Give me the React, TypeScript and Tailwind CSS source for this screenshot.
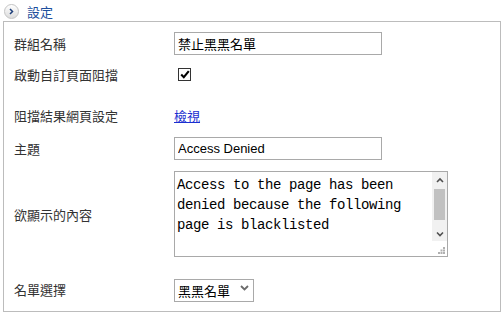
import React from 'react';

const cjk = { fontFamily: '"Noto Sans CJK TC", "Noto Sans", sans-serif' };

function Chevron({ dir }: { dir: 'up' | 'down' }) {
  return (
    <svg width="8" height="6" viewBox="0 0 8 6">
      {dir === 'up' ? (
        <path d="M1 5 L4 2 L7 5" fill="none" stroke="#505050" strokeWidth="1.6" />
      ) : (
        <path d="M1 1.5 L4 4.5 L7 1.5" fill="none" stroke="#505050" strokeWidth="1.6" />
      )}
    </svg>
  );
}

function Row({ label, children, className }: { label: string; children: React.ReactNode; className: string }) {
  return (
    <div className={`flex items-center ${className}`}>
      <div className="w-[170px] pl-[10px] text-[13px] text-[#333] leading-none" style={cjk}>
        {label}
      </div>
      <div className="flex items-center">{children}</div>
    </div>
  );
}

export default function App() {
  return (
    <div className="w-[503px] h-[316px] bg-white pl-[3px]" style={cjk}>
      {/* Header */}
      <div className="flex items-center h-[21px] pl-[1px] pt-[1px]">
        <div className="w-[15px] h-[15px] rounded-full border border-[#c4c4c4] bg-gradient-to-b from-white to-[#dcdcdc] flex items-center justify-center">
          <svg width="5" height="7" viewBox="0 0 5 7">
            <path d="M1 1 L3.5 3.5 L1 6" fill="none" stroke="#1e3f7a" strokeWidth="1.5" />
          </svg>
        </div>
        <span className="ml-[8px] text-[13px] text-[#1d4f9e] leading-none">設定</span>
      </div>

      {/* Panel */}
      <div className="w-[498px] h-[291px] border border-[#bcbcbc] pt-[10px]">
        <Row label="群組名稱" className="h-[23px]">
          <input
            defaultValue="禁止黑黑名單"
            className="w-[208px] h-[23px] border border-[#a9a9a9] px-[3px] text-[13px] text-black outline-none"
            style={cjk}
          />
        </Row>

        <Row label="啟動自訂頁面阻擋" className="h-[13px] mt-[13px]">
          <span className="ml-[4px] w-[13px] h-[13px] border border-[#333] bg-white flex items-center justify-center">
            <svg width="10" height="9" viewBox="0 0 10 9">
              <path d="M1.2 4.6 L3.8 7.2 L8.8 1.2" fill="none" stroke="#000" strokeWidth="2.1" />
            </svg>
          </span>
        </Row>

        <Row label="阻擋結果網頁設定" className="h-[15px] mt-[27px]">
          <a href="#" className="text-[13px] text-[#1a2fd0] underline leading-none">
            檢視
          </a>
        </Row>

        <Row label="主題" className="h-[23px] mt-[14px]">
          <input
            defaultValue="Access Denied"
            className="w-[208px] h-[23px] border border-[#a9a9a9] px-[3px] text-[13px] text-black outline-none"
            style={{ fontFamily: '"Liberation Sans", Arial, sans-serif' }}
          />
        </Row>

        <Row label="欲顯示的內容" className="h-[86px] mt-[11px]">
          <div className="w-[274px] h-[86px] border border-[#a9a9a9] flex">
            <textarea
              defaultValue={'Access to the page has been denied because the following page is blacklisted'}
              className="flex-1 resize-none outline-none overflow-hidden pl-[2px] pt-[3px] text-[14px] tracking-[-0.4px] leading-[20px] text-black"
              style={{ fontFamily: '"Liberation Mono", "Courier New", monospace' }}
            />
            <div className="w-[15px] flex flex-col">
              <div className="h-[69px] bg-[#f1f1f1] flex flex-col">
                <div className="h-[15px] flex items-center justify-center">
                  <Chevron dir="up" />
                </div>
                <div className="h-[39px] px-[2px] pt-[2px]">
                  <div className="h-[31px] bg-[#c1c1c1]" />
                </div>
                <div className="h-[15px] flex items-center justify-center">
                  <Chevron dir="down" />
                </div>
              </div>
              <div className="flex-1 flex items-end justify-end pr-[2px] pb-[2px]">
                <svg width="7" height="7" viewBox="0 0 7 7">
                  <rect x="5" y="0" width="2" height="2" fill="#b0b0b0" />
                  <rect x="2.5" y="2.5" width="2" height="2" fill="#b0b0b0" />
                  <rect x="5" y="2.5" width="2" height="2" fill="#b0b0b0" />
                  <rect x="0" y="5" width="2" height="2" fill="#b0b0b0" />
                  <rect x="2.5" y="5" width="2" height="2" fill="#b0b0b0" />
                  <rect x="5" y="5" width="2" height="2" fill="#b0b0b0" />
                </svg>
              </div>
            </div>
          </div>
        </Row>

        <Row label="名單選擇" className="h-[23px] mt-[21px]">
          <div className="relative">
            <select
              defaultValue="black"
              className="appearance-none w-[80px] h-[23px] border border-[#a9a9a9] bg-white pl-[3px] text-[13px] text-black outline-none"
              style={cjk}
            >
              <option value="black">黑黑名單</option>
              <option value="white">白白名單</option>
            </select>
            <span className="absolute right-[5px] top-[8px] pointer-events-none">
              <svg width="9" height="6" viewBox="0 0 9 6">
                <path d="M1 1 L4.5 4.5 L8 1" fill="none" stroke="#6b6b6b" strokeWidth="1.8" />
              </svg>
            </span>
          </div>
        </Row>
      </div>
    </div>
  );
}
